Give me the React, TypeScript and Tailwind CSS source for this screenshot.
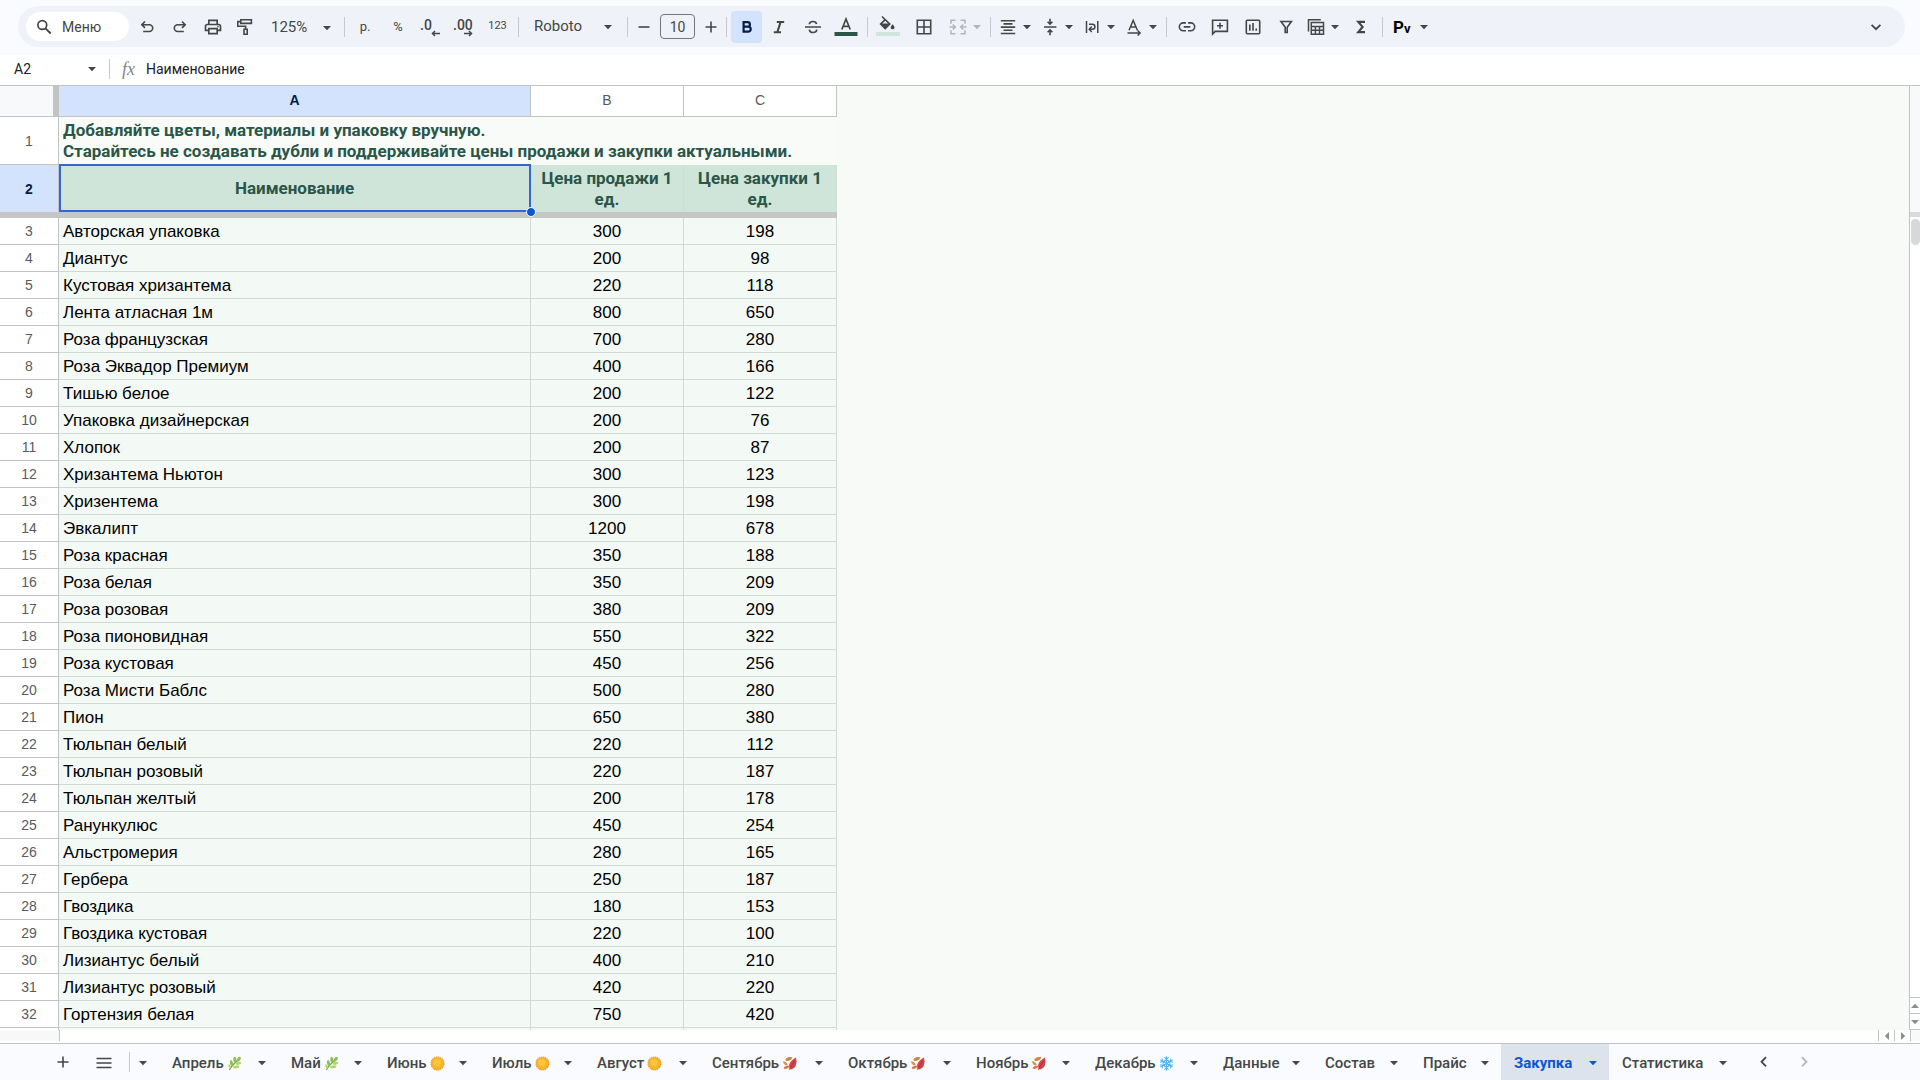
import React from "react";
import { MdOutlinePrint } from "react-icons/md";

type Row = [string, number, number];

const rows: Row[] = [
  ["Авторская упаковка", 300, 198],
  ["Диантус", 200, 98],
  ["Кустовая хризантема", 220, 118],
  ["Лента атласная 1м", 800, 650],
  ["Роза французская", 700, 280],
  ["Роза Эквадор Премиум", 400, 166],
  ["Тишью белое", 200, 122],
  ["Упаковка дизайнерская", 200, 76],
  ["Хлопок", 200, 87],
  ["Хризантема Ньютон", 300, 123],
  ["Хризентема", 300, 198],
  ["Эвкалипт", 1200, 678],
  ["Роза красная", 350, 188],
  ["Роза белая", 350, 209],
  ["Роза розовая", 380, 209],
  ["Роза пионовидная", 550, 322],
  ["Роза кустовая", 450, 256],
  ["Роза Мисти Баблс", 500, 280],
  ["Пион", 650, 380],
  ["Тюльпан белый", 220, 112],
  ["Тюльпан розовый", 220, 187],
  ["Тюльпан желтый", 200, 178],
  ["Ранункулюс", 450, 254],
  ["Альстромерия", 280, 165],
  ["Гербера", 250, 187],
  ["Гвоздика", 180, 153],
  ["Гвоздика кустовая", 220, 100],
  ["Лизиантус белый", 400, 210],
  ["Лизиантус розовый", 420, 220],
  ["Гортензия белая", 750, 420],
];

function Icon({ children, className = "" }: { children: React.ReactNode; className?: string }) {
  return (
    <svg
      viewBox="0 0 20 20"
      fill="none"
      stroke="currentColor"
      strokeWidth="1.6"
      aria-hidden="true"
      className={`size-5 shrink-0 ${className}`}
    >
      {children}
    </svg>
  );
}

function Caret({ className = "" }: { className?: string }) {
  return (
    <svg viewBox="0 0 10 10" fill="currentColor" aria-hidden="true" className={`size-[10px] shrink-0 ${className}`}>
      <path d="M1 3h8L5 7.2z" />
    </svg>
  );
}

function Divider({ className = "" }: { className?: string }) {
  return <span className={`h-5 w-px shrink-0 bg-[#c7c9cc] ${className}`} />;
}

function Tool({ label, className, children }: { label: string; className: string; children: React.ReactNode }) {
  return (
    <button type="button" aria-label={label} className={`flex h-8 shrink-0 items-center justify-center ${className}`}>
      {children}
    </button>
  );
}

function DropTool({ label, className = "", children }: { label: string; className?: string; children: React.ReactNode }) {
  return (
    <button type="button" aria-label={label} className={`flex h-8 shrink-0 items-center gap-1 px-1 ${className}`}>
      {children}
      <Caret />
    </button>
  );
}

function Toolbar() {
  return (
    <header className="h-[55px] shrink-0 bg-[#f9fbff] pt-[6px] pr-[15px] pl-[18px]">
      <div className="flex h-[41px] items-center rounded-full bg-[#eff3f9] pl-2 text-[#444746]">
        <button type="button" className="flex h-[29px] w-[103px] shrink-0 items-center gap-2 rounded-full bg-white pl-2 text-sm">
          <Icon>
            <circle cx="8.3" cy="8" r="4.4" strokeWidth="1.7" />
            <path d="M11.5 11.3l5.2 5.2" strokeWidth="1.9" />
          </Icon>
          Меню
        </button>
        <Tool label="Отменить" className="ml-px w-[33px]">
          <Icon>
            <path d="M8 4.5L4.8 7.7L8 10.9M5 7.7h7.3a3.4 3.4 0 0 1 0 6.8H6.2" />
          </Icon>
        </Tool>
        <Tool label="Повторить" className="w-[33px]">
          <Icon>
            <path d="M12 4.5l3.2 3.2L12 10.9M15 7.7H7.7a3.4 3.4 0 0 0 0 6.8h6.1" />
          </Icon>
        </Tool>
        <Tool label="Печать" className="w-[33px]">
          <MdOutlinePrint className="size-5" />
        </Tool>
        <Tool label="Копировать форматирование" className="w-[31px]">
          <Icon>
            <path d="M5.8 2.8h10.6v3.6H5.8zM5.8 4.6H2.8v4.7h7.8v3M9 12.3h3.2v4.9H9z" />
          </Icon>
        </Tool>
        <button type="button" aria-label="Масштаб" className="flex h-8 w-[84px] shrink-0 items-center justify-between pt-[2px] pr-3 pl-[11px] text-[15px]">
          125%
          <Caret />
        </button>
        <Divider />
        <Tool label="Денежный формат" className="w-10 text-[13px]">р.</Tool>
        <Tool label="Процентный формат" className="w-[26px] text-[13px]">%</Tool>
        <Tool label="Уменьшить число знаков" className="w-[38px]">
          <span className="relative h-5 w-5 text-left text-[14px] leading-4 font-medium">
            .0
            <svg viewBox="0 0 9 7" className="absolute right-0 bottom-0 h-[7px] w-[9px]" fill="none" stroke="currentColor" strokeWidth="1.5">
              <path d="M9 3.5H1.5M4 1L1.5 3.5L4 6" />
            </svg>
          </span>
        </Tool>
        <Tool label="Увеличить число знаков" className="w-7">
          <span className="relative h-5 w-5 text-left text-[14px] leading-4 font-medium">
            .00
            <svg viewBox="0 0 9 7" className="absolute right-0 bottom-0 h-[7px] w-[9px]" fill="none" stroke="currentColor" strokeWidth="1.5">
              <path d="M0 3.5h7.5M5 1l2.5 2.5L5 6" />
            </svg>
          </span>
        </Tool>
        <Tool label="Другие форматы" className="w-[41px] text-[11px]">123</Tool>
        <Divider />
        <button type="button" aria-label="Шрифт" className="flex h-8 w-[108px] shrink-0 items-center justify-between pr-[14px] pl-[15px] text-[15px]">
          Roboto
          <Caret />
        </button>
        <Divider />
        <Tool label="Уменьшить размер шрифта" className="w-8">
          <Icon><path d="M4.5 10h11" /></Icon>
        </Tool>
        <input
          aria-label="Размер шрифта"
          defaultValue="10"
          className="h-[25px] w-[35px] shrink-0 rounded-[4px] border border-[#747775] bg-transparent text-center text-sm"
        />
        <Tool label="Увеличить размер шрифта" className="w-[31px]">
          <Icon><path d="M4.5 10h11M10 4.5v11" /></Icon>
        </Tool>
        <Divider />
        <Tool label="Полужирный" className="ml-1 w-[31px] rounded-[4px] bg-[#d3e3fd] text-[#041e49]">
          <Icon>
            <path d="M6.6 5.1h4a2.3 2.3 0 0 1 0 4.6h-4zM6.6 9.7h4.6a2.5 2.5 0 0 1 0 5H6.6z" strokeWidth="2.2" />
          </Icon>
        </Tool>
        <Tool label="Курсив" className="w-[34px]">
          <Icon>
            <path d="M7.8 5h7.4M4.8 15.2h7.2M11.6 5L8.3 15.2" strokeWidth="2.1" />
          </Icon>
        </Tool>
        <Tool label="Зачёркнутый" className="w-[33px]">
          <Icon>
            <path d="M2 10h16M13.6 7C13.2 5.3 12 4.5 10 4.5S6.4 5.5 6.4 7.2M6.3 12.6c.3 2 1.6 2.9 3.7 2.9s3.7-1 3.7-2.9" strokeWidth="1.7" />
          </Icon>
        </Tool>
        <Tool label="Цвет текста" className="w-[34px]">
          <svg viewBox="0 0 24 24" className="h-6 w-6 shrink-0" fill="none" stroke="currentColor" strokeWidth="1.7">
            <path d="M7.8 14.5L12 4l4.2 10.5M9.3 11.3h5.4" />
            <path d="M0.5 19h23" stroke="#2a5648" strokeWidth="4" />
          </svg>
        </Tool>
        <Divider className="ml-1" />
        <Tool label="Цвет заливки" className="w-10">
          <svg viewBox="0 0 24 24" className="h-6 w-6 shrink-0" fill="none" stroke="currentColor" strokeWidth="1.6">
            <path d="M6 1.5l7.8 7.6-4.6 4.5-4.6-4.5 4.6-4.5" />
            <path d="M5 8.6h8.6l-4.4 4.8z" fill="currentColor" stroke="none" />
            <path d="M16.6 9.2c1.2 1.5 1.9 2.3 1.9 3.2a1.9 1.9 0 0 1-3.8 0c0-.9.7-1.7 1.9-3.2z" fill="currentColor" stroke="none" />
            <path d="M0 19h24" stroke="#d0e5dc" strokeWidth="4" />
          </svg>
        </Tool>
        <Tool label="Границы" className="w-[31px]">
          <Icon><path d="M3.3 3.3h13.4v13.4H3.3zM10 3.3v13.4M3.3 10h13.4" /></Icon>
        </Tool>
        <DropTool label="Объединить ячейки" className="ml-[5px] text-[#b3b6b9]">
          <Icon>
            <path d="M7.5 3.3H3v3.5M7.5 16.7H3v-3.5M12.5 3.3H17v3.5M12.5 16.7H17v-3.5M1.5 10H7M4.8 7.5L7.3 10l-2.5 2.5M18.5 10H13M15.2 7.5L12.7 10l2.5 2.5" />
          </Icon>
        </DropTool>
        <Divider className="ml-1" />
        <DropTool label="Выравнивание по горизонтали" className="ml-[3px]">
          <Icon><path d="M2.8 3.7h14.4M5.5 6.9h9M2.8 10.1h14.4M5.5 13.3h9M2.8 16.5h14.4" /></Icon>
        </DropTool>
        <DropTool label="Выравнивание по вертикали">
          <Icon>
            <path d="M4 10h12.4M10 1.8v5M10 18.2v-5M7.6 4.7L10 7.1l2.4-2.4M7.6 15.3L10 12.9l2.4 2.4" />
          </Icon>
        </DropTool>
        <DropTool label="Перенос текста">
          <Icon>
            <path d="M4.5 4v12M15.8 4v12M7 7.3h3.4a2.5 2.5 0 0 1 0 5H7.3M9.8 9.6l-2.6 2.7 2.6 2.7" strokeWidth="1.5" />
          </Icon>
        </DropTool>
        <DropTool label="Поворот текста">
          <Icon>
            <path d="M5 13.3L9.2 3.5l4.2 9.8M6.5 10h5.4M3.5 16h12.5M13.6 13.5L16.1 16l-2.5 2.5" strokeWidth="1.5" />
          </Icon>
        </DropTool>
        <Divider className="ml-1" />
        <Tool label="Вставить ссылку" className="ml-[3px] w-[33px]">
          <Icon>
            <path d="M9 5.9H6.3a3.9 3.9 0 0 0 0 7.9H9M11 5.9h2.7a3.9 3.9 0 0 1 0 7.9H11M6.7 9.9h6.6" />
          </Icon>
        </Tool>
        <Tool label="Вставить комментарий" className="w-[33px]">
          <Icon>
            <path d="M2.6 17V3.2h14.8v11.2H5.2zM10 5.8v6M7 8.8h6" />
          </Icon>
        </Tool>
        <Tool label="Вставить диаграмму" className="w-[33px]">
          <Icon>
            <rect x="3.3" y="3.3" width="13.4" height="13.4" rx="1" />
            <path d="M6.8 7.5v6.3M10 6v7.8M13.2 11.6v2.2" />
          </Icon>
        </Tool>
        <Tool label="Создать фильтр" className="w-[33px]">
          <Icon><path d="M5 4.5h10.4l-4.2 5.7v5.3H9.2v-5.3z" /></Icon>
        </Tool>
        <DropTool label="Представления таблицы">
          <Icon>
            <path d="M2.5 14.5V2.7h12.3M5.3 5.5h12.2v11.7H5.3zM5.3 9.4h12.2M5.3 13.3h12.2M9.4 9.4v7.8M13.5 9.4v7.8" strokeWidth="1.5" />
          </Icon>
        </DropTool>
        <Tool label="Функции" className="w-[34px]">
          <Icon><path d="M14 4.9H7.3l4.3 5-4.3 5.2H14" strokeWidth="2.2" /></Icon>
        </Tool>
        <Divider className="ml-1" />
        <DropTool label="Надстройка" className="ml-[6px]">
          <span className="flex w-[22px] items-end text-[17px] leading-5 font-bold text-black">
            P<span className="text-[13px] leading-4">v</span>
          </span>
        </DropTool>
        <Tool label="Скрыть меню" className="mr-[14px] ml-auto w-[31px]">
          <Icon><path d="M5.6 7.8L10 12.2l4.4-4.4" strokeWidth="1.8" /></Icon>
        </Tool>
      </div>
    </header>
  );
}

function FormulaBar() {
  return (
    <div className="flex h-[30px] shrink-0 items-center bg-white pb-[2px] text-[#202124]">
      <input aria-label="Поле имени" defaultValue="A2" className="w-[75px] pl-[14px] text-sm" />
      <button type="button" aria-label="Диапазоны" className="flex w-[34px] justify-center text-[#444746]">
        <Caret />
      </button>
      <Divider />
      <span className="w-9 pl-3 font-['Liberation_Serif',serif] text-[18px] leading-5 text-[#80868b] italic">fx</span>
      <input aria-label="Строка формул" defaultValue="Наименование" className="min-w-0 flex-1 text-sm" />
    </div>
  );
}

const rowHead = "border-r border-b border-[#c0c4c2] bg-white p-0 text-center text-sm font-normal text-[#575b5f]";
const colHead = "h-[31px] border-r border-b border-[#c0c4c2] bg-white p-0 pb-[2px] text-center text-sm font-normal text-[#575b5f]";
const cell = "border-r border-b border-[#d3dad6] bg-[#f3f9f5] px-0 pt-[2px] pb-0 leading-5 whitespace-nowrap";
const greenHead =
  "relative h-[47px] border-r border-[#cbdfd4] bg-[#d0e5d9] px-1 py-0 text-center font-['Roboto',sans-serif] leading-[21px] font-bold text-[#2a5648]";

function Sheet() {
  return (
    <div className="min-h-0 flex-1 overflow-hidden bg-[#f7faf7]">
      <table className="w-[837px] table-fixed border-separate border-spacing-0 font-['Liberation_Sans',Arial,sans-serif] text-[17px] text-black">
        <colgroup>
          <col className="w-[59px]" />
          <col className="w-[472px]" />
          <col className="w-[153px]" />
          <col className="w-[153px]" />
        </colgroup>
        <thead>
          <tr>
            <td className="border-r-[6px] border-b border-r-[#c0c4c2] border-b-[#c0c4c2] bg-[#f8f9fa]" />
            <th scope="col" className="border-r border-b border-[#c0c4c2] bg-[#d3e3fd] p-0 pb-[2px] text-center text-sm font-bold text-[#041e49]">A</th>
            <th scope="col" className={colHead}>B</th>
            <th scope="col" className={colHead}>C</th>
          </tr>
        </thead>
        <tbody>
          <tr>
            <th scope="row" className={rowHead}>1</th>
            <td colSpan={3} className="h-12 bg-[#f8fbf8] py-0 pr-0 pl-1 font-['Roboto',sans-serif] leading-[21px] font-bold whitespace-nowrap text-[#2a5648]">
              Добавляйте цветы, материалы и упаковку вручную.
              <br />
              Старайтесь не создавать дубли и поддерживайте цены продажи и закупки актуальными.
            </td>
          </tr>
          <tr>
            <th scope="row" className="border-r border-[#c0c4c2] bg-[#d3e3fd] p-0 text-center text-sm font-bold text-[#041e49]">2</th>
            <td className={greenHead}>
              Наименование
              <span className="absolute -top-px -right-px bottom-0 left-0 border-2 border-[#3367d6]" />
              <span className="absolute -right-[6px] -bottom-[5px] z-10 size-[10px] rounded-full border border-white bg-[#0b57d0]" />
            </td>
            <td className={greenHead}>Цена продажи 1 ед.</td>
            <td className={greenHead}>Цена закупки 1 ед.</td>
          </tr>
          <tr>
            <td colSpan={4} className="h-[6px] bg-[#c5c7c6] p-0" />
          </tr>
          {rows.map(([name, sale, buy], i) => (
            <tr key={i}>
              <th scope="row" className={rowHead}>{i + 3}</th>
              <td className={`h-[27px] pl-1! ${cell}`}>{name}</td>
              <td className={`text-center ${cell}`}>{sale}</td>
              <td className={`text-center ${cell}`}>{buy}</td>
            </tr>
          ))}
          <tr>
            <th scope="row" className={rowHead} />
            <td className={`h-[27px] ${cell}`} />
            <td className={cell} />
            <td className={cell} />
          </tr>
        </tbody>
      </table>
    </div>
  );
}

function VerticalScroll() {
  return (
    <div className="flex w-[11px] shrink-0 flex-col border-l border-[#c0c4c2] bg-white text-[#8b8f92]">
      <div className="h-[126px] bg-[#f8f9fa]" />
      <div className="h-[5px] bg-[#d8dadb]" />
      <div className="mt-[2px] ml-px h-[26px] rounded-full bg-[#d6d8d9]" />
      <button type="button" aria-label="Вверх" className="mt-auto flex h-4 items-center justify-center border-t border-[#c0c4c2]">
        <Caret className="size-[7px] rotate-180" />
      </button>
      <button type="button" aria-label="Вниз" className="flex h-[17px] items-center justify-center border-y border-[#c0c4c2]">
        <Caret className="size-[7px]" />
      </button>
    </div>
  );
}

function HorizontalScroll() {
  return (
    <div className="flex h-[13px] shrink-0 bg-white pb-[2px] text-[#8b8f92]">
      <div className="w-[60px] border-r border-[#c0c4c2] bg-[#f8f8f8]" />
      <button type="button" aria-label="Влево" className="ml-auto flex w-4 items-center justify-center border-l border-[#c0c4c2]">
        <Caret className="size-[7px] rotate-90" />
      </button>
      <button type="button" aria-label="Вправо" className="flex w-4 items-center justify-center border-l border-[#c0c4c2]">
        <Caret className="size-[7px] -rotate-90" />
      </button>
      <div className="w-[10px] border-l border-[#c0c4c2] bg-[#f8f9fa]" />
    </div>
  );
}

type Mark = "herb" | "sun" | "leaf" | "snow";

function MarkIcon({ kind }: { kind: Mark }) {
  return (
    <svg viewBox="0 0 16 16" aria-hidden="true" className="size-[15px] shrink-0">
      {kind === "herb" && (
        <>
          <path d="M2.5 15C4.5 11 7.500 8 12 4" stroke="#6f9f45" strokeWidth="1.2" fill="none" />
          <g fill="#8cc152">
            <ellipse cx="12.5" cy="3.5" rx="1.7" ry="3" transform="rotate(40 12.5 3.5)" />
            <ellipse cx="8.3" cy="3.8" rx="1.6" ry="3.100" transform="rotate(-5 8.3 3.8)" />
            <ellipse cx="4.8" cy="7.5" rx="1.6" ry="3.200" transform="rotate(-15 4.8 7.5)" />
          </g>
          <g fill="#b5d568">
            <ellipse cx="12.2" cy="7.8" rx="1.6" ry="3" transform="rotate(80 12.2 7.8)" />
            <ellipse cx="9.8" cy="11.6" rx="1.6" ry="3.400" transform="rotate(85 9.8 11.6)" />
            <ellipse cx="2.8" cy="11" rx="1.2" ry="2.300" transform="rotate(-25 2.8 11)" />
          </g>
        </>
      )}
      {kind === "sun" && (
        <>
          <circle cx="8" cy="8" r="6.8" fill="#f7b52c" stroke="#ee9d2b" strokeWidth="1.4" strokeDasharray="1.5 .6" />
          <circle cx="7.5" cy="7" r="4" fill="#fcc535" />
        </>
      )}
      {kind === "leaf" && (
        <>
          <path d="M3.5 3.5C6 .5 9.500 1 11 1.5C10 4.500 7 6 4 5z" fill="#d9853b" />
          <path d="M1 5.500c3 0 5 2 5 4.500C3.500 10.500 1.500 8.500 1 5.500z" fill="#e08e45" />
          <path d="M14.800 1.500C16.500 8 15 13.500 9 14.500C5.500 10.500 8.500 5 14.800 1.500z" fill="#cf434b" />
          <path d="M13.500 5L7.500 15" stroke="#a3352f" strokeWidth=".8" fill="none" />
          <path d="M1.500 13c1.500-2.500 4-3 6.500-2.500-.5 2.800-3.800 4.300-6.500 2.500z" fill="#dc7443" />
        </>
      )}
      {kind === "snow" && (
        <g stroke="#4fb0ee" strokeWidth="1.1" fill="none">
          {[0, 60, 120, 180, 240, 300].map((a) => (
            <path key={a} d="M8 8V.5M5.800 1.300L8 3.500l2.200-2.200M6.200 4L8 5.800L9.800 4" transform={`rotate(${a} 8 8)`} />
          ))}
        </g>
      )}
    </svg>
  );
}

const tabs: { name: string; width: string; mark?: Mark; active?: boolean }[] = [
  { name: "Апрель", width: "w-[119px]", mark: "herb" },
  { name: "Май", width: "w-[96px]", mark: "herb" },
  { name: "Июнь", width: "w-[105px]", mark: "sun" },
  { name: "Июль", width: "w-[105px]", mark: "sun" },
  { name: "Август", width: "w-[115px]", mark: "sun" },
  { name: "Сентябрь", width: "w-[136px]", mark: "leaf" },
  { name: "Октябрь", width: "w-[128px]", mark: "leaf" },
  { name: "Ноябрь", width: "w-[119px]", mark: "leaf" },
  { name: "Декабрь", width: "w-[128px]", mark: "snow" },
  { name: "Данные", width: "w-[102px]" },
  { name: "Состав", width: "w-[98px]" },
  { name: "Прайс", width: "w-[91px]" },
  { name: "Закупка", width: "w-[108px]", active: true },
  { name: "Статистика", width: "w-[130px]" },
];

function SheetTabs() {
  return (
    <nav aria-label="Листы" className="flex h-[37px] shrink-0 border-t border-[#c0c4c2] bg-[#f9fbff] pl-[46px] text-[#444746]">
      <Tool label="Добавить лист" className="mt-[2px] w-[34px]">
        <Icon><path d="M4.5 10h11M10 4.5v11" /></Icon>
      </Tool>
      <Tool label="Все листы" className="mt-[3px] w-12">
        <Icon><path d="M2.5 5.5h15M2.5 10h15M2.5 14.5h15" /></Icon>
      </Tool>
      <Divider className="mt-2 ml-px" />
      <Tool label="Ещё" className="mt-[3px] w-[29px] pr-1">
        <Caret />
      </Tool>
      {tabs.map((t) => (
        <button
          key={t.name}
          type="button"
          className={`flex shrink-0 items-center justify-between pt-[2px] pr-[11px] pl-[13px] text-[15px] ${t.width} ${
            t.active ? "bg-[#dde3ec] font-bold text-[#0b57d0]" : "font-medium"
          }`}
        >
          <span className="flex items-center gap-[3px]">
            {t.name}
            {t.mark && <MarkIcon kind={t.mark} />}
          </span>
          <Caret />
        </button>
      ))}
      <Tool label="Прокрутить влево" className="mt-[2px] ml-[5px] w-10">
        <Icon><path d="M12 5.2L7.6 9.8L12 14.4" strokeWidth="1.9" /></Icon>
      </Tool>
      <Tool label="Прокрутить вправо" className="mt-[2px] w-10 text-[#b5b8bb]">
        <Icon><path d="M8 5.2l4.4 4.6L8 14.4" strokeWidth="1.9" /></Icon>
      </Tool>
    </nav>
  );
}

export default function App() {
  return (
    <div className="flex h-screen flex-col overflow-hidden bg-white font-['Roboto',sans-serif]">
      <Toolbar />
      <FormulaBar />
      <main className="flex min-h-0 flex-1 border-t border-[#c0c4c2]">
        <Sheet />
        <VerticalScroll />
      </main>
      <HorizontalScroll />
      <SheetTabs />
    </div>
  );
}
